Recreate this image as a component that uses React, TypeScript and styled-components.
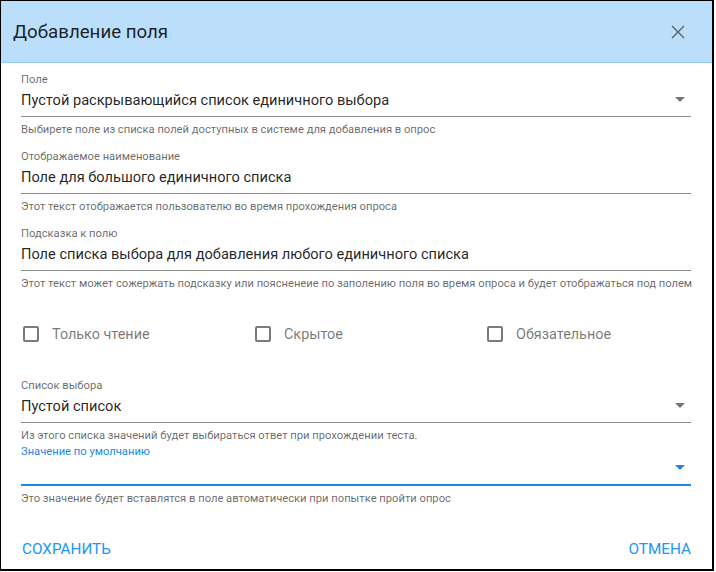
import React from "react";
import styled, { createGlobalStyle } from "styled-components";

const Global = createGlobalStyle`
  html, body { margin: 0; padding: 0; background: #fff; }
  body { font-family: Roboto, "Noto Sans", Arial, sans-serif; }
  * { box-sizing: border-box; }
`;

const Frame = styled.div`
  width: 714px;
  height: 571px;
  border-style: solid;
  border-color: #000;
  border-width: 1px 2px 2px 1px;
  background: #fff;
  display: flex;
  flex-direction: column;
`;

const Header = styled.div`
  height: 62px;
  background: #bbdefb;
  border-bottom: 1px solid #90caf9;
  display: flex;
  align-items: center;
  justify-content: space-between;
  padding: 0 26px 0 12px;
  flex-shrink: 0;
`;

const Title = styled.h2`
  margin: 0;
  font-size: 18.7px;
  font-weight: 400;
  color: rgba(0, 0, 0, 0.87);
  line-height: 24px;
`;

const CloseButton = styled.button`
  border: none;
  background: transparent;
  padding: 0;
  width: 16px;
  height: 16px;
  display: flex;
  align-items: center;
  justify-content: center;
  cursor: pointer;
`;

const Body = styled.div`
  padding: 10px 21px 0 20px;
  display: flex;
  flex-direction: column;
`;

const Field = styled.div<{ $gap?: number }>`
  display: flex;
  flex-direction: column;
  margin-top: ${(p) => p.$gap ?? 0}px;
`;

const Label = styled.div<{ $focused?: boolean }>`
  font-size: 11.2px;
  line-height: 14px;
  color: ${(p) => (p.$focused ? "#1e88e5" : "rgba(0,0,0,0.6)")};
`;

const InputRow = styled.div<{ $focused?: boolean; $h?: number }>`
  height: ${(p) => p.$h ?? 30}px;
  display: flex;
  align-items: flex-end;
  justify-content: space-between;
  padding: 0 6px 6px 0;
  border-bottom: ${(p) => (p.$focused ? "2px solid #1e88e5" : "1px solid #8c8c8c")};
`;

const Value = styled.div`
  font-size: 14.6px;
  line-height: 20px;
  color: rgba(0, 0, 0, 0.87);
`;

const Arrow = styled.div<{ $focused?: boolean }>`
  width: 0;
  height: 0;
  border-left: 5px solid transparent;
  border-right: 5px solid transparent;
  border-top: 5px solid ${(p) => (p.$focused ? "#1e88e5" : "#757575")};
  margin-bottom: 8px;
`;

const Helper = styled.div`
  margin-top: 6px;
  font-size: 11.2px;
  line-height: 13px;
  color: rgba(0, 0, 0, 0.6);
  white-space: nowrap;
`;

const CheckRow = styled.div`
  margin-top: 23px;
  height: 42px;
  display: grid;
  grid-template-columns: repeat(3, 232px);
  padding-left: 2px;
  align-items: center;
`;

const CheckItem = styled.label`
  display: flex;
  align-items: center;
  gap: 13px;
  cursor: pointer;
`;

const Box = styled.span`
  width: 16px;
  height: 16px;
  border: 2px solid #7a7a7a;
  border-radius: 2px;
  display: inline-block;
`;

const CheckText = styled.span`
  font-size: 14.4px;
  color: rgba(0, 0, 0, 0.55);
`;

const Footer = styled.div`
  margin-top: auto;
  height: 40px;
  display: flex;
  justify-content: space-between;
  align-items: center;
  padding: 0 21px 0 21px;
`;

const TextButton = styled.button`
  border: none;
  background: transparent;
  padding: 0;
  font-family: inherit;
  font-size: 15.3px;
  line-height: 18px;
  color: #2196f3;
  text-transform: uppercase;
  cursor: pointer;
`;

type FieldProps = {
  label: string;
  value?: string;
  helper: string;
  select?: boolean;
  focused?: boolean;
  gap?: number;
  h?: number;
};

const FormField = ({ label, value, helper, select, focused, gap, h }: FieldProps) => (
  <Field $gap={gap}>
    <Label $focused={focused}>{label}</Label>
    <InputRow $focused={focused} $h={h}>
      <Value>{value}</Value>
      {select && <Arrow $focused={focused} />}
    </InputRow>
    <Helper>{helper}</Helper>
  </Field>
);

export default function App() {
  return (
    <>
      <Global />
      <Frame>
        <Header>
          <Title>Добавление поля</Title>
          <CloseButton aria-label="close">
            <svg width="14" height="14" viewBox="0 0 14 14">
              <path d="M1 1 L13 13 M13 1 L1 13" stroke="#616161" strokeWidth="1.4" />
            </svg>
          </CloseButton>
        </Header>
        <Body>
          <FormField
            label="Поле"
            value="Пустой раскрывающийся список единичного выбора"
            helper="Выбирете поле из списка полей доступных в системе для добавления в опрос"
            select
          />
          <FormField
            gap={14}
            label="Отображаемое наименование"
            value="Поле для большого единичного списка"
            helper="Этот текст отображается пользователю во время прохождения опроса"
          />
          <FormField
            gap={14}
            label="Подсказка к полю"
            value="Поле списка выбора для добавления любого единичного списка"
            helper="Этот текст может сожержать подсказку или поясненеие по заполению поля во время опроса и будет отображаться под полем"
          />
          <CheckRow>
            <CheckItem>
              <Box />
              <CheckText>Только чтение</CheckText>
            </CheckItem>
            <CheckItem>
              <Box />
              <CheckText>Скрытое</CheckText>
            </CheckItem>
            <CheckItem>
              <Box />
              <CheckText>Обязательное</CheckText>
            </CheckItem>
          </CheckRow>
          <FormField
            gap={24}
            label="Список выбора"
            value="Пустой список"
            helper="Из этого списка значений будет выбираться ответ при прохождении теста."
            select
          />
          <FormField
            gap={3}
            label="Значение по умолчанию"
            value=""
            helper="Это значение будет вставлятся в поле автоматически при попытке пройти опрос"
            select
            focused
            h={27}
          />
        </Body>
        <Footer>
          <TextButton>Сохранить</TextButton>
          <TextButton>Отмена</TextButton>
        </Footer>
      </Frame>
    </>
  );
}
